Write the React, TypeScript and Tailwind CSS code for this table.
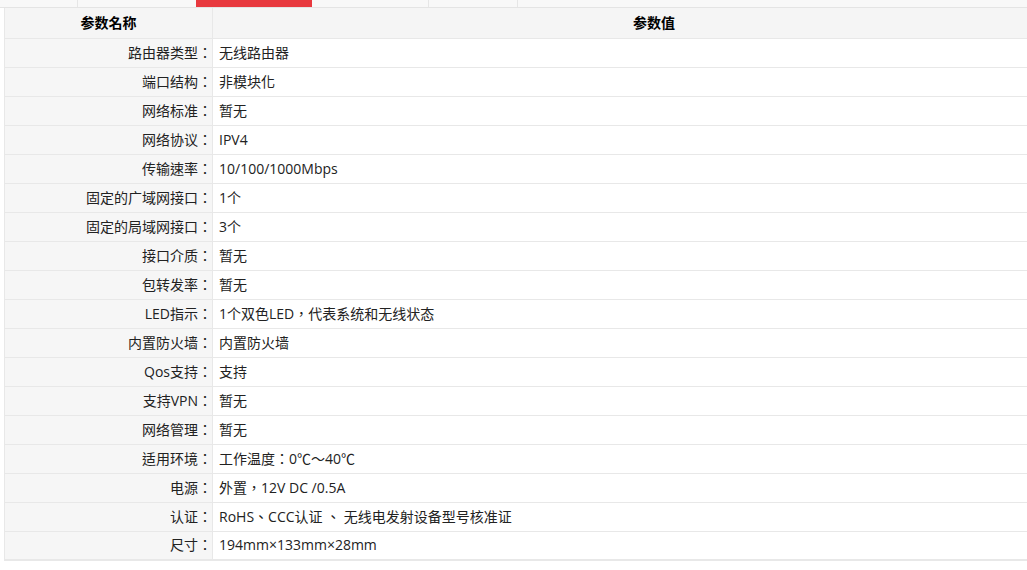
const rows: [string, string][] = [
  ["路由器类型", "无线路由器"],
  ["端口结构", "非模块化"],
  ["网络标准", "暂无"],
  ["网络协议", "IPV4"],
  ["传输速率", "10/100/1000Mbps"],
  ["固定的广域网接口", "1个"],
  ["固定的局域网接口", "3个"],
  ["接口介质", "暂无"],
  ["包转发率", "暂无"],
  ["LED指示", "1个双色LED，代表系统和无线状态"],
  ["内置防火墙", "内置防火墙"],
  ["Qos支持", "支持"],
  ["支持VPN", "暂无"],
  ["网络管理", "暂无"],
  ["适用环境", "工作温度：0℃～40℃"],
  ["电源", "外置，12V DC /0.5A"],
  ["认证", "RoHS、CCC认证 、 无线电发射设备型号核准证"],
  ["尺寸", "194mm×133mm×28mm"],
];

export default function App() {
  return (
    <div
      className="h-[570px] w-[1027px] overflow-hidden bg-white text-[14px] text-[#222]"
      style={{ fontFamily: '"Open Sans", "Noto Sans CJK TC", sans-serif' }}
    >
      {/* tab strip */}
      <div className="flex h-[8px] border-b border-[#e4e4e4] bg-[#f8f8f8]">
        <div className="w-[78px] border-r border-[#e6e6e6]" />
        <div className="w-[118px]" />
        <div className="w-[116px] bg-[#e8393e]" />
        <div className="w-[117px] border-r border-[#e6e6e6]" />
        <div className="w-[89px] border-r border-[#e6e6e6]" />
        <div className="flex-1" />
      </div>

      <div className="pl-[4px]">
        <table className="w-full border-collapse border-b-2 border-l border-[#e8e8e8] leading-[20px]">
          <thead>
            <tr className="h-[30px] bg-[#f5f5f5]">
              <th className="w-[208px] border-r border-b border-[#e8e8e8] text-center font-bold text-black">
                参数名称
              </th>
              <th className="border-b border-[#e8e8e8] pl-[68px] text-center font-bold text-black">参数值</th>
            </tr>
          </thead>
          <tbody>
            {rows.map(([k, v], i) => (
              <tr key={k} className="h-[29px]">
                <td
                  className={`border-r border-[#e8e8e8] bg-[#f6f6f6] p-0 text-right ${
                    i < rows.length - 1 ? "border-b" : ""
                  }`}
                >
                  {k}：
                </td>
                <td className={`border-[#e8e8e8] p-0 pl-[6px] ${i < rows.length - 1 ? "border-b" : ""}`}>{v}</td>
              </tr>
            ))}
          </tbody>
        </table>
      </div>
    </div>
  );
}
